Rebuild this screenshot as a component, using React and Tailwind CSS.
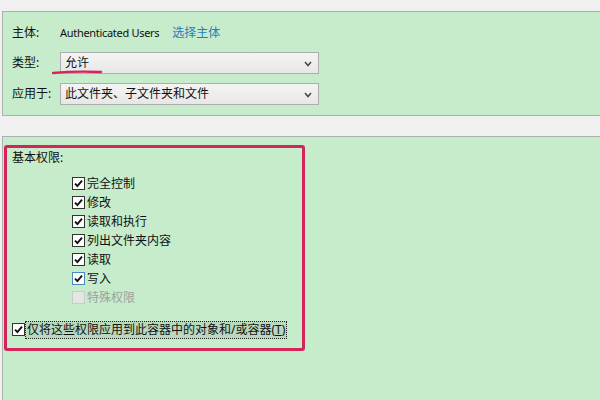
import React from "react";

const font = { fontFamily: '"Noto Sans", "Noto Sans CJK SC", sans-serif' };

function Check({ checked = true, disabled = false, focus = false }) {
  return (
    <div
      className={
        "w-[13px] h-[13px] shrink-0 border flex items-center justify-center " +
        (disabled
          ? "bg-[#e4e6e4] border-[#c9cdc9]"
          : focus
          ? "bg-white border-[#4a8ab8]"
          : "bg-white border-[#333333]")
      }
    >
      {checked && !disabled && (
        <svg width="9" height="9" viewBox="0 0 9 9">
          <path d="M1 4.6 L3.4 7 L8 1.6" fill="none" stroke="#111" strokeWidth="1.9" />
        </svg>
      )}
    </div>
  );
}

function Select({ value }) {
  return (
    <div className="relative w-[259px] h-[22px] border border-[#adadad] bg-gradient-to-b from-[#f4f4f4] to-[#e7e7e7] flex items-center pl-[4px] text-[12px] text-[#111]">
      {value}
      <svg className="absolute right-[6px] top-[8px]" width="8" height="6" viewBox="0 0 8 6">
        <path d="M1 1 L4 4.5 L7 1" fill="none" stroke="#444" strokeWidth="1.5" />
      </svg>
    </div>
  );
}

const perms = [
  ["完全控制", true],
  ["修改", true],
  ["读取和执行", true],
  ["列出文件夹内容", true],
  ["读取", true],
  ["写入", true, false, true],
  ["特殊权限", false, true],
];

export default function App() {
  return (
    <div className="w-[600px] h-[400px] bg-[#f0f0f0] overflow-hidden flex flex-col text-[#111]" style={font}>
      <div className="h-[11px] shrink-0" />
      <div className="ml-[2px] h-[105px] shrink-0 border-t border-l border-b border-[#a9b2aa] bg-[#c6eccb] pl-[9px] pt-[13px] flex flex-col">
        <div className="h-[16px] flex items-center text-[12px]">
          <span className="w-[48px]">主体:</span>
          <span className="text-[11px] tracking-[-0.3px]">Authenticated Users</span>
          <span className="ml-[13px] text-[#2a7cc0]">选择主体</span>
        </div>
        <div className="mt-[11px] flex items-center text-[12px] relative">
          <span className="w-[48px]">类型:</span>
          <Select value="允许" />
          <svg className="absolute left-[40px] top-[17px]" width="52" height="6" viewBox="0 0 52 6">
            <path d="M1 4 Q24 1.8 49 3" fill="none" stroke="#d5245a" strokeWidth="2.4" strokeLinecap="round" />
          </svg>
        </div>
        <div className="mt-[9px] flex items-center text-[12px]">
          <span className="w-[48px]">应用于:</span>
          <Select value="此文件夹、子文件夹和文件" />
        </div>
      </div>
      <div className="h-[20px] shrink-0" />
      <div className="ml-[2px] flex-1 border-t border-l border-[#a9b2aa] bg-[#c6eccb] pl-[1px] pt-[8px]">
        <div className="w-[301px] h-[206px] border-[3px] border-[#d5245a] rounded-[3px] pl-[5px] pt-[2px] flex flex-col text-[12px]">
          <div className="h-[16px] flex items-center">基本权限:</div>
          <div className="mt-[8px] flex flex-col">
            {perms.map(([label, checked, disabled, focus]) => (
              <div key={label} className="h-[19px] flex items-center ml-[60px] gap-[2px]">
                <Check checked={checked} disabled={disabled} focus={focus} />
                <span className={disabled ? "text-[#9da19d]" : ""}>{label}</span>
              </div>
            ))}
          </div>
          <div className="mt-[13px] h-[19px] flex items-center gap-[0px]">
            <Check />
            <span className="border border-dotted border-[#222] px-[1px] leading-[16px] bg-[#b9d8bd]">
              仅将这些权限应用到此容器中的对象和/或容器(<span className="underline">T</span>)
            </span>
          </div>
        </div>
      </div>
    </div>
  );
}
